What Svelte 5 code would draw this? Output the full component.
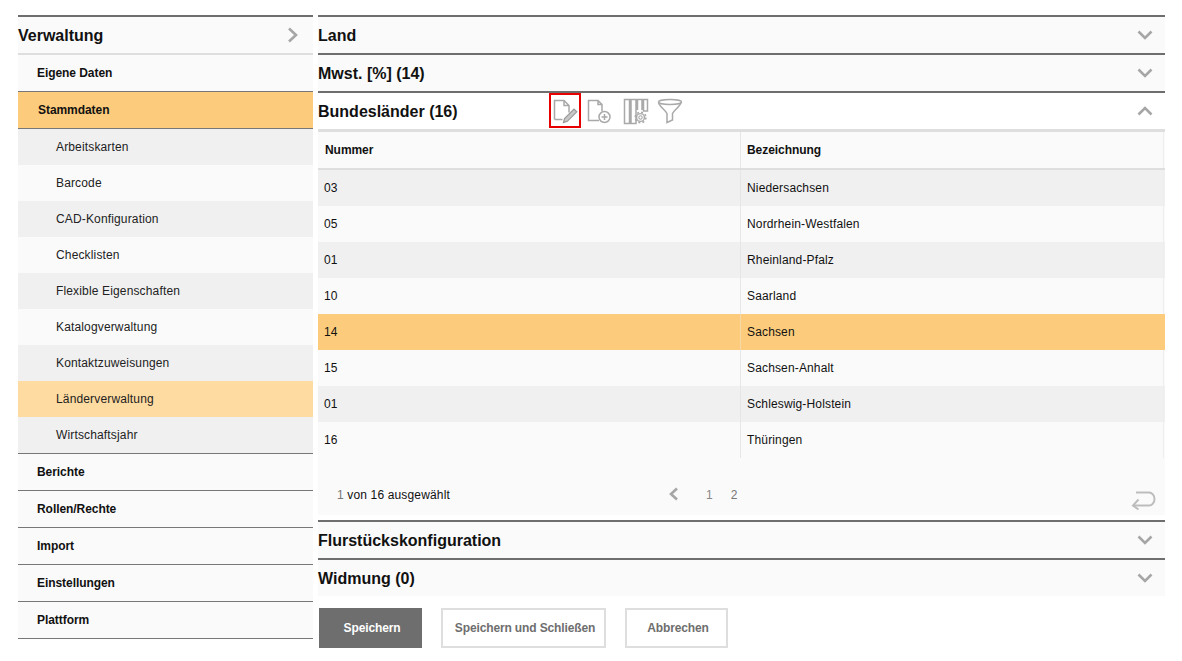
<script>
  const subs = ['Arbeitskarten','Barcode','CAD-Konfiguration','Checklisten','Flexible Eigenschaften','Katalogverwaltung','Kontaktzuweisungen','Länderverwaltung','Wirtschaftsjahr'];
  const bottoms = ['Berichte','Rollen/Rechte','Import','Einstellungen','Plattform'];
  const rows = [['03','Niedersachsen'],['05','Nordrhein-Westfalen'],['01','Rheinland-Pfalz'],['10','Saarland'],['14','Sachsen'],['15','Sachsen-Anhalt'],['01','Schleswig-Holstein'],['16','Thüringen']];
</script>

{#snippet chevDown()}
  <svg class="chev" width="16" height="10" viewBox="0 0 16 10"><path d="M1.5 1.5 8 8l6.500-6.500" /></svg>
{/snippet}

{#snippet section(title)}
  <section class="sec">
    <h2>{title}</h2>
    {@render chevDown()}
  </section>
{/snippet}

<div class="page">
  <aside class="side">
    <div class="side-head">
      <span>Verwaltung</span>
      <svg class="chev" width="12" height="16" viewBox="0 0 12 16"><path d="M2 1.500 9 8l-7 6.500" /></svg>
    </div>
    <div class="lvl1 first">Eigene Daten</div>
    <div class="lvl1 active">Stammdaten</div>
    <ul class="subs">
      {#each subs as s, i}
        <li class:alt={i % 2 === 0} class:cur={s === 'Länderverwaltung'}>{s}</li>
      {/each}
    </ul>
    {#each bottoms as b}
      <div class="lvl1 bottom">{b}</div>
    {/each}
  </aside>

  <main class="main">
    {@render section('Land')}
    {@render section('Mwst. [%] (14)')}
    <section class="sec open">
      <h2>Bundesländer (16)</h2>
      <div class="tools">
        <span class="tool sel">
          <svg width="28" height="31" viewBox="0 0 28 31"><path d="M3.500 24.500V5.500h9.500l5 5v7M13 5.500v5h5M3.500 24.500h8" /><path class="solid" d="M12.500 27.500l1-4 9.500-9.500 2.800 2.800-9.500 9.500z" /></svg>
        </span>
        <span class="tool">
          <svg width="28" height="35" viewBox="0 0 28 35"><path d="M12 27.500H1.500v-20h9.500l4 4v7M11 7.500v4h4" /><circle cx="17.500" cy="24" r="5.500" /><path d="M14.500 24h6M17.500 21v6" /></svg>
        </span>
        <span class="tool">
          <svg width="28" height="35" viewBox="0 0 28 35"><path d="M3.500 6.500h5v24h-5zM10 6.500h5v24h-5zM16.500 17V6.500h4.500V17M22.500 6.500h4v11.500h-4z" /><circle class="hub" cx="19.500" cy="24.500" r="1.700" /><circle class="ring" cx="19.500" cy="24.500" r="3.900" /><circle class="gear" cx="19.500" cy="24.500" r="5.300" /></svg>
        </span>
        <span class="tool">
          <svg width="28" height="35" viewBox="0 0 28 35"><ellipse cx="15" cy="9" rx="11.500" ry="2.500" /><path d="M3.500 9.500c1 4 7 8 8.500 11v9l5.500-2.500v-6.500c1.500-3 7.500-7 8.500-11" /></svg>
        </span>
      </div>
      <svg class="chev" width="16" height="10" viewBox="0 0 16 10"><path d="M1.500 8.500 8 2l6.500 6.500" /></svg>
    </section>
    <div class="grid">
      <div class="grow ghead"><div class="c1">Nummer</div><div class="c2">Bezeichnung</div></div>
      {#each rows as r, i}
        <div class="grow" class:alt={i % 2 === 0} class:sel={r[1] === 'Sachsen'}>
          <div class="c1">{r[0]}</div><div class="c2">{r[1]}</div>
        </div>
      {/each}
      <div class="foot">
        <span class="count"><b>1</b> von 16 ausgewählt</span>
        <div class="pager">
          <svg class="chev" width="11" height="14" viewBox="0 0 11 14"><path d="M9 1.500 3 7l6 5.500" /></svg>
          <span class="p1">1</span><span class="p2">2</span>
        </div>
        <svg class="back" width="26" height="20" viewBox="0 0 26 20"><path d="M5 1.500h13a5.500 6.500 0 0 1 0 13H2" /><path d="M7.500 8.500 2 14.500l5.500 4" /></svg>
      </div>
    </div>
    {@render section('Flurstückskonfiguration')}
    {@render section('Widmung (0)')}
    <div class="actions">
      <button class="primary">Speichern</button>
      <button class="b2">Speichern und Schließen</button>
      <button class="b3">Abbrechen</button>
    </div>
  </main>
</div>

<style>
  :global(body) { margin: 0; background: #fff; }
  .page {
    width: 1182px; height: 661px; box-sizing: border-box; overflow: hidden;
    display: flex; gap: 5px; padding: 15px 17px 0 18px;
    font-family: "Liberation Sans", Arial, sans-serif; color: #111; font-size: 12px;
    letter-spacing: 0.15px;
  }
  .side { width: 295px; flex: none; background: #fafafa; align-self: flex-start; }
  .side-head {
    height: 36px; border-top: 2px solid #6e6e6e; border-bottom: 2px solid #dedede;
    display: flex; align-items: center; justify-content: space-between;
    font-size: 16px; font-weight: bold; padding-right: 14px; letter-spacing: 0;
  }
  .side-head span { padding-top: 2px; }
  .chev path { fill: none; stroke: #a6a6a6; stroke-width: 2.600; }
  .lvl1 {
    height: 36px; line-height: 36px; padding-left: 19px; font-weight: bold;
    border-bottom: 1px solid #777; letter-spacing: -0.06px;
  }
  .lvl1.active { background: #fccc7c; padding-left: 20px; }
  .subs { list-style: none; margin: 0; padding: 0; border-bottom: 1px solid #777; }
  .subs li { height: 36px; line-height: 37px; padding-left: 38px; background: #fafafa; color: #222; }
  .subs li.alt { background: #f0f0f0; }
  .subs li.cur { background: #fedba0; }
  .main { flex: 1; min-width: 0; }
  .sec {
    height: 36px; border-top: 2px solid #6e6e6e; background: #fafafa;
    display: flex; align-items: center; justify-content: space-between; padding-right: 12px;
    position: relative; letter-spacing: 0;
  }
  .sec h2 { margin: 0; padding-top: 2px; font-size: 16px; font-weight: bold; }
  .sec.open { background: #fff; }
  .tools { position: absolute; left: 231px; top: 0; display: flex; gap: 6px; }
  .tool { width: 28px; height: 35px; box-sizing: border-box; display: flex; align-items: center; justify-content: center; }
  .tool.sel { width: 32px; border: 2px solid #e60000; }
  .tool svg path, .tool svg circle, .tool svg ellipse { fill: none; stroke: #a9a9a9; stroke-width: 1.500; }
  .tool svg path.solid { fill: #c6c6c6; stroke: #999; stroke-width: 1.200; }
  .tool svg circle.ring { stroke-width: 1.400; }
  .tool svg circle.gear { stroke-width: 1.600; stroke-dasharray: 2 2.160; }
  .tool svg circle.hub { stroke-width: 1.100; }
  .grid { border-top: 3px solid #dedede; }
  .grow { display: flex; height: 36px; line-height: 37px; background: #fafafa; }
  .ghead { font-weight: bold; border-bottom: 2px solid #dedede; letter-spacing: -0.06px; }
  .grow.alt { background: #f0f0f0; }
  .grow.sel { background: #fccc7c; }
  .grow.sel .c1 { border-color: #f5d9a8; }
  .grow.sel .c2 { border-color: transparent; }
  .c1 { width: 423px; box-sizing: border-box; padding-left: 6px; border-right: 1px solid #e6e6e6; }
  .c2 { flex: 1; padding-left: 6px; border-right: 1px solid #eee; margin-right: 1px; }
  .ghead .c1 { padding-left: 7px; }
  .foot { height: 57px; margin-bottom: 5px; background: #fafafa; position: relative; display: flex; align-items: center; }
  .count { padding-left: 19px; padding-top: 17px; }
  .count b { font-weight: normal; color: #777; }
  .pager { position: absolute; left: 350px; top: 28px; display: flex; align-items: center; color: #888; }
  .pager span { padding-top: 2px; }
  .p1 { margin-left: 27px; }
  .p2 { margin-left: 18px; color: #777; }
  .back { position: absolute; right: 8px; top: 33px; }
  .back path { fill: none; stroke: #bdbdbd; stroke-width: 2; }
  .actions { display: flex; gap: 19px; padding: 12px 0 0 1px; }
  button {
    height: 40px; box-sizing: border-box; font: bold 12px "Liberation Sans", Arial, sans-serif;
    background: #fff; color: #6e6e6e; border: 2px solid #dedede; padding: 0 0 0 3px; letter-spacing: -0.13px;
  }
  .primary { width: 103px; background: #6e6e6e; border-color: #6e6e6e; color: #fff; }
  .b2 { width: 165px; }
  .b3 { width: 103px; }
</style>
